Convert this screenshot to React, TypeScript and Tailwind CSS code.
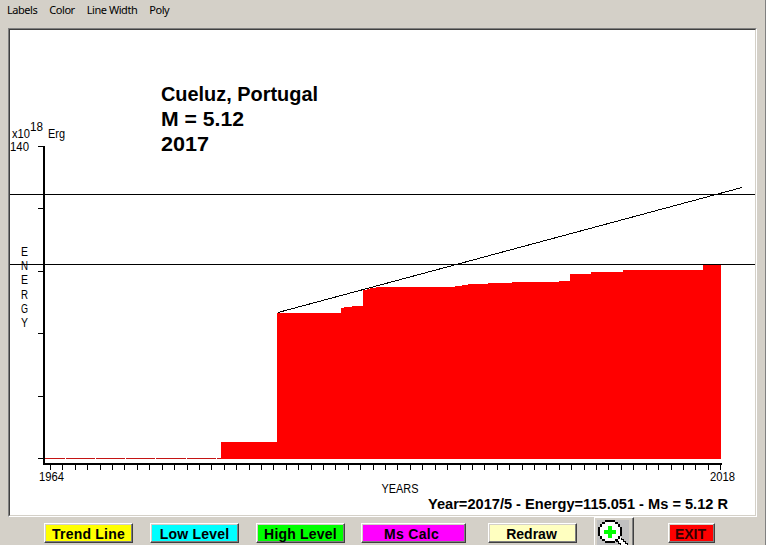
import React from 'react';

const MENU = ['Labels', 'Color', 'Line Width', 'Poly'];

// left edge and top of every step in the cumulative energy curve
const STEPS = [
  [221, 442], [277, 313], [341, 308], [344, 307], [352, 306], [363, 290],
  [367, 289], [370, 288], [376, 287], [455, 286], [462, 285], [468, 284],
  [488, 283], [512, 282], [559, 281], [570, 274], [591, 272], [623, 270], [703, 265],
];
const BASE_Y = 459;
const END_X = 721;

const YEAR_TICKS = Array.from({ length: 55 }, (_, i) => Math.round(50 + i * 12.41));
const ENERGY_TICKS = [146, 208, 271, 333, 396, 458];
const BASELINE_DASHES = [[45, 65], [66, 95], [96, 125], [126, 155], [156, 186], [187, 216], [217, 221]];

function EnergyChart() {
  const area =
    STEPS.map(([x, y], i) => `${i ? 'H' : `M${x} ${BASE_Y}V${y}H`}${x}V${y}`).join('') +
    `H${END_X}V${BASE_Y}Z`;

  return (
    <svg
      viewBox="10 30 745 485"
      className="block h-[485px] w-[745px] font-['Liberation_Sans',Arial,sans-serif]"
    >
      <g shapeRendering="crispEdges">
        <path d={area} fill="#ff0000" />
        {BASELINE_DASHES.map(([a, b]) => (
          <rect key={a} x={a} y={458} width={b - a} height={1} fill="#c41414" />
        ))}
        <rect x={43} y={146} width={2} height={319} />
        <rect x={43} y={463} width={679} height={2} />
        {ENERGY_TICKS.map((y) => (
          <rect key={y} x={38} y={y} width={5} height={1} />
        ))}
        {YEAR_TICKS.map((x) => (
          <rect key={x} x={x} y={465} width={1} height={5} />
        ))}
        <rect x={10} y={194} width={745} height={1} />
        <rect x={10} y={264} width={745} height={1} />
        <line x1={278} y1={312.5} x2={742} y2={187.5} stroke="#000" />
      </g>

      <g fontSize={12}>
        <text x={12} y={138} textLength={18} lengthAdjust="spacingAndGlyphs">x10</text>
        <text x={30} y={131} textLength={13} lengthAdjust="spacingAndGlyphs">18</text>
        <text x={48} y={138} textLength={17} lengthAdjust="spacingAndGlyphs">Erg</text>
        <text x={10} y={151} textLength={19} lengthAdjust="spacingAndGlyphs">140</text>
        {'ENERGY'.split('').map((c, i) => (
          <text key={i} x={21} y={256 + i * 14.2} textLength={7} lengthAdjust="spacingAndGlyphs">{c}</text>
        ))}
        <text x={39} y={481} textLength={25} lengthAdjust="spacingAndGlyphs">1964</text>
        <text x={710} y={481} textLength={25} lengthAdjust="spacingAndGlyphs">2018</text>
        <text x={381.5} y={493} textLength={37} lengthAdjust="spacingAndGlyphs">YEARS</text>
      </g>

      <g fontWeight="bold">
        <g fontSize={20}>
          <text x={161} y={101} textLength={157} lengthAdjust="spacingAndGlyphs">Cueluz, Portugal</text>
          <text x={161} y={126} textLength={83} lengthAdjust="spacingAndGlyphs">M = 5.12</text>
          <text x={161} y={151} textLength={48} lengthAdjust="spacingAndGlyphs">2017</text>
        </g>
        <text x={428} y={509} fontSize={14} textLength={300} lengthAdjust="spacingAndGlyphs">
          Year=2017/5 - Energy=115.051 - Ms = 5.12 R
        </text>
      </g>
    </svg>
  );
}

function ToolButton({ label, className }: { label: string; className: string }) {
  return (
    <button
      className={`mt-[6px] flex h-[20px] shrink-0 items-center justify-center whitespace-nowrap border border-t-white border-l-white border-r-[#404040] border-b-[#404040] pt-px text-[14px] leading-none font-bold shadow-[inset_-1px_-1px_0_#808080,inset_1px_1px_0_#d4d0c8] ${className}`}
    >
      {label}
    </button>
  );
}

function ZoomIcon() {
  return (
    <svg viewBox="0 0 38 34" className="block h-[34px] w-[38px] shrink-0" shapeRendering="crispEdges">
      <path d="M2 2H34V34H2Z" fill="#c0c0c0" />
      <path d="M22 20H27V21H29V23H31V25H33V27H35V34H31V32H29V30H27V28H25V26H23V24H21V22Z" fill="#000" />
      <path d="M22 19H26V22H28V24H30V26H32V28H34V34H32V31H30V29H28V27H26V25H24V23H22Z" fill="#fff" />
      <path d="M10 2H20V4H23V6H25V9H27V18H25V21H23V23H20V25H10V23H7V21H5V18H3V9H5V6H7V4H10Z" fill="#000" />
      <path d="M10 4H20V6H23V9H25V18H23V21H20V23H10V21H7V18H5V9H7V6H10Z" fill="#fff" />
      <path d="M13 8H17V12H21V16H17V20H13V16H9V12H13Z" fill="#00ff00" />
    </svg>
  );
}

export default function App() {
  return (
    <div className="flex h-[545px] w-[766px] flex-col overflow-hidden border-r border-[#808080] bg-[#d4d0c8] font-['Liberation_Sans',Arial,sans-serif] text-black">
      <nav className="flex h-[28px] shrink-0 gap-[12px] pt-[2px] pl-[7px] font-['Noto_Sans',sans-serif] text-[11px] leading-[15px] tracking-[-0.45px]">
        {MENU.map((item) => (
          <span key={item}>{item}</span>
        ))}
      </nav>

      <main className="ml-[8px] h-[489px] w-[749px] shrink-0 border border-t-[#808080] border-l-[#808080] border-r-white border-b-white bg-white">
        <div className="h-[487px] w-[747px] border border-t-[#404040] border-l-[#404040] border-r-[#d4d0c8] border-b-[#d4d0c8]">
          <EnergyChart />
        </div>
      </main>

      <footer className="flex shrink-0 items-start pl-[44px]">
        <ToolButton label="Trend Line" className="w-[89px] bg-[#ffff00] tracking-[0.2px]" />
        <ToolButton label="Low Level" className="ml-[17px] w-[89px] bg-[#00ffff] tracking-[0.2px]" />
        <ToolButton label="High Level" className="ml-[17px] w-[89px] bg-[#00ff00] tracking-[0.2px]" />
        <ToolButton label="Ms Calc" className="ml-[16px] w-[105px] bg-[#ff00ff] pr-[4px] tracking-[0.3px]" />
        <ToolButton label="Redraw" className="ml-[22px] w-[89px] bg-[#ffffc0] pr-[2px]" />
        <button
          aria-label="Zoom in"
          className="ml-[17px] flex h-[36px] w-[40px] shrink-0 items-start border border-t-white border-l-white border-r-[#404040] border-b-[#404040] bg-[#d4d0c8] shadow-[inset_-1px_0_0_#808080]"
        >
          <ZoomIcon />
        </button>
        <ToolButton label="EXIT" className="ml-[34px] w-[47px] bg-[#ff0000] pr-[2px] text-[#300000]" />
      </footer>
    </div>
  );
}
